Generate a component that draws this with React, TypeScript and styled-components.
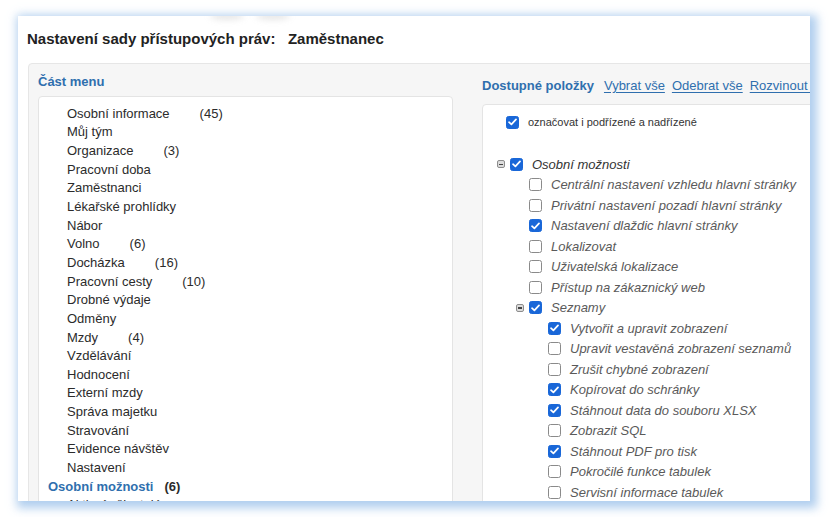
import React, { FC } from 'react';
import styled, { createGlobalStyle } from 'styled-components';

const GlobalStyle = createGlobalStyle`
  html, body {
    margin: 0;
    padding: 0;
    background: #ffffff;
  }
  body {
    font-family: "Liberation Sans", Arial, sans-serif;
    color: #333333;
  }
`;

const Page = styled.div`
  width: 829px;
  height: 517px;
  padding: 16px 0 0 18px;
  box-sizing: border-box;
  overflow: hidden;
`;

const Frame = styled.div`
  position: relative;
  width: 792px;
  height: 485px;
  background: #ffffff;
  overflow: hidden;
  box-shadow: 3px 3px 9px 4px rgba(150, 190, 232, 0.75);
  padding: 14px 0 0 9px;
  box-sizing: border-box;
`;

const Smudge = styled.div<{ $left: number }>`
  position: absolute;
  top: -4px;
  left: ${({ $left }) => $left}px;
  width: 34px;
  height: 8px;
  border-radius: 50%;
  background: rgba(120, 120, 120, 0.18);
  filter: blur(3px);
`;

const Title = styled.h1`
  margin: 0;
  font-size: 15px;
  font-weight: 700;
  line-height: 18px;
  color: #222222;
  white-space: pre;
`;

const Panel = styled.div`
  margin: 15px 0 0 1px;
  width: 900px;
  height: 520px;
  background: #f6f6f6;
  border: 1px solid #e6e6e6;
  border-radius: 4px;
  padding: 8px 0 0 9px;
  box-sizing: border-box;
  display: flex;
  gap: 29px;
`;

const Column = styled.div<{ $width: number; $offset: number }>`
  width: ${({ $width }) => $width}px;
  margin-top: ${({ $offset }) => $offset}px;
  display: flex;
  flex-direction: column;
  flex-shrink: 0;
`;

const Header = styled.div`
  display: flex;
  align-items: baseline;
  gap: 7px;
  height: 20px;
  font-size: 13px;
  line-height: 20px;
  white-space: nowrap;
`;

const HeaderTitle = styled.span`
  font-weight: 700;
  color: #2f6fae;
  margin-right: 3px;
`;

const HeaderLink = styled.a`
  color: #2f6fae;
  text-decoration: underline;
  text-underline-offset: 2px;
`;

const Box = styled.div<{ $gap: number }>`
  margin-top: ${({ $gap }) => $gap}px;
  background: #ffffff;
  border: 1px solid #e4e4e4;
  border-radius: 4px;
  height: 500px;
  box-sizing: border-box;
`;

const MenuList = styled.ul`
  list-style: none;
  margin: 0;
  padding: 7px 0 0 0;
`;

const MenuItem = styled.li<{ $section?: boolean }>`
  display: flex;
  align-items: center;
  height: 18.65px;
  font-size: 13px;
  color: #2b2b2b;
  padding-left: ${({ $section }) => ($section ? 9 : 28)}px;
  white-space: nowrap;
`;

const SectionName = styled.span`
  font-weight: 700;
  color: #2f6fae;
`;

const Count = styled.span<{ $bold?: boolean }>`
  margin-left: ${({ $bold }) => ($bold ? 11 : 30)}px;
  font-weight: ${({ $bold }) => ($bold ? 700 : 400)};
  color: #2b2b2b;
`;

const Option = styled.div`
  display: flex;
  align-items: center;
  gap: 9px;
  height: 20px;
  margin: 7px 0 0 23px;
  font-size: 11px;
  color: #333333;
`;

const Tree = styled.div`
  margin-top: 22px;
  padding-left: 14px;
`;

const TreeRow = styled.div<{ $level: number }>`
  display: flex;
  align-items: center;
  height: 20.5px;
  padding-left: ${({ $level }) => $level * 19}px;
  font-size: 13px;
  font-style: italic;
  white-space: nowrap;
`;

const Expander = styled.span`
  position: relative;
  width: 8px;
  height: 8px;
  margin-right: 5px;
  border: 1px solid #8d8d8d;
  border-radius: 2px;
  background: #dcdcdc;
  box-sizing: border-box;
  &::after {
    content: '';
    position: absolute;
    left: 1px;
    right: 1px;
    top: 2.5px;
    height: 1.5px;
    background: #444444;
  }
`;

const Spacer = styled.span`
  width: 13px;
  flex-shrink: 0;
`;

const Box13 = styled.span<{ $checked: boolean }>`
  display: inline-flex;
  align-items: center;
  justify-content: center;
  width: 13px;
  height: 13px;
  flex-shrink: 0;
  box-sizing: border-box;
  border-radius: 2.5px;
  background: ${({ $checked }) => ($checked ? '#1967d8' : '#ffffff')};
  border: 1px solid ${({ $checked }) => ($checked ? '#1967d8' : '#8a8a8a')};
`;

const Label = styled.span<{ $dark?: boolean }>`
  margin-left: 9px;
  color: ${({ $dark }) => ($dark ? '#333333' : '#5a5a5a')};
`;

const Checkbox: FC<{ checked: boolean }> = ({ checked }) => (
  <Box13 $checked={checked}>
    {checked && (
      <svg width="9" height="8" viewBox="0 0 9 8">
        <path d="M1 4.2 L3.4 6.4 L8 1.4" fill="none" stroke="#ffffff" strokeWidth="1.7" strokeLinecap="round" strokeLinejoin="round" />
      </svg>
    )}
  </Box13>
);

const menu: [string, number?][] = [
  ['Osobní informace', 45],
  ['Můj tým'],
  ['Organizace', 3],
  ['Pracovní doba'],
  ['Zaměstnanci'],
  ['Lékařské prohlídky'],
  ['Nábor'],
  ['Volno', 6],
  ['Docházka', 16],
  ['Pracovní cesty', 10],
  ['Drobné výdaje'],
  ['Odměny'],
  ['Mzdy', 4],
  ['Vzdělávání'],
  ['Hodnocení'],
  ['Externí mzdy'],
  ['Správa majetku'],
  ['Stravování'],
  ['Evidence návštěv'],
  ['Nastavení'],
];

interface Node {
  label: string;
  level: number;
  checked: boolean;
  group?: boolean;
}

const tree: Node[] = [
  { label: 'Osobní možnosti', level: 0, checked: true, group: true },
  { label: 'Centrální nastavení vzhledu hlavní stránky', level: 1, checked: false },
  { label: 'Privátní nastavení pozadí hlavní stránky', level: 1, checked: false },
  { label: 'Nastavení dlaždic hlavní stránky', level: 1, checked: true },
  { label: 'Lokalizovat', level: 1, checked: false },
  { label: 'Uživatelská lokalizace', level: 1, checked: false },
  { label: 'Přístup na zákaznický web', level: 1, checked: false },
  { label: 'Seznamy', level: 1, checked: true, group: true },
  { label: 'Vytvořit a upravit zobrazení', level: 2, checked: true },
  { label: 'Upravit vestavěná zobrazení seznamů', level: 2, checked: false },
  { label: 'Zrušit chybné zobrazení', level: 2, checked: false },
  { label: 'Kopírovat do schránky', level: 2, checked: true },
  { label: 'Stáhnout data do souboru XLSX', level: 2, checked: true },
  { label: 'Zobrazit SQL', level: 2, checked: false },
  { label: 'Stáhnout PDF pro tisk', level: 2, checked: true },
  { label: 'Pokročilé funkce tabulek', level: 2, checked: false },
  { label: 'Servisní informace tabulek', level: 2, checked: false },
];

const App: FC = () => (
  <>
    <GlobalStyle />
    <Page>
      <Frame>
        <Smudge $left={192} />
        <Smudge $left={238} />
        <Title>{'Nastavení sady přístupových práv:   Zaměstnanec'}</Title>
        <Panel>
          <Column $width={415} $offset={0}>
            <Header>
              <HeaderTitle>Část menu</HeaderTitle>
            </Header>
            <Box $gap={4}>
              <MenuList>
                {menu.map(([name, count]) => (
                  <MenuItem key={name}>
                    {name}
                    {count !== undefined && <Count>({count})</Count>}
                  </MenuItem>
                ))}
                <MenuItem $section>
                  <SectionName>Osobní možnosti</SectionName>
                  <Count $bold>(6)</Count>
                </MenuItem>
                <MenuItem>Aktivní uživatelé</MenuItem>
              </MenuList>
            </Box>
          </Column>
          <Column $width={420} $offset={4}>
            <Header>
              <HeaderTitle>Dostupné položky</HeaderTitle>
              <HeaderLink>Vybrat vše</HeaderLink>
              <HeaderLink>Odebrat vše</HeaderLink>
              <HeaderLink>Rozvinout vše</HeaderLink>
            </Header>
            <Box $gap={8}>
              <Option>
                <Checkbox checked />
                označovat i podřízené a nadřízené
              </Option>
              <Tree>
                {tree.map((n) => (
                  <TreeRow key={n.label} $level={n.level}>
                    {n.group ? <Expander /> : <Spacer />}
                    <Checkbox checked={n.checked} />
                    <Label $dark={n.level === 0}>{n.label}</Label>
                  </TreeRow>
                ))}
              </Tree>
            </Box>
          </Column>
        </Panel>
      </Frame>
    </Page>
  </>
);

export default App;
